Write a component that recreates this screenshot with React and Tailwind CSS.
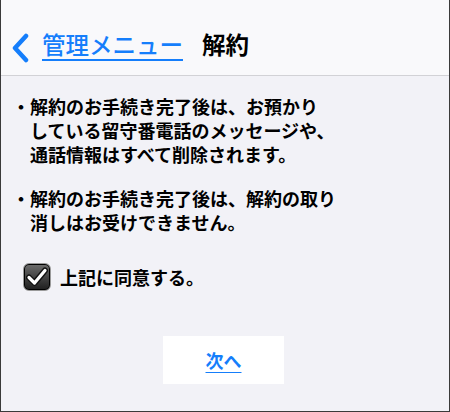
import React, { useState } from 'react';

const font = { fontFamily: '"Noto Sans CJK JP", "Noto Sans", sans-serif' };

function Bullet({ children }) {
  return (
    <div className="flex text-[18px] leading-[24px] font-bold text-black">
      <span className="w-[18px] shrink-0 text-center">・</span>
      <p>{children}</p>
    </div>
  );
}

function CheckBox({ checked }) {
  return (
    <span className="flex h-[28px] w-[28px] items-center justify-center rounded-[6px] border border-[#9a9a9a] bg-gradient-to-b from-[#6e6e6e] to-[#1e1e1e] shadow-[inset_0_0_0_1px_#000]">
      {checked && (
        <svg width="22" height="20" viewBox="0 0 22 20">
          <path d="M3 10.5 L8.5 16 L19 3.5" fill="none" stroke="#111" strokeWidth="6" strokeLinecap="round" strokeLinejoin="round" />
          <path d="M3 10.5 L8.5 16 L19 3.5" fill="none" stroke="#fff" strokeWidth="3.2" strokeLinecap="round" strokeLinejoin="round" />
        </svg>
      )}
    </span>
  );
}

export default function App() {
  const [agreed, setAgreed] = useState(true);

  return (
    <div style={font} className="flex h-[412px] w-[450px] flex-col border-x border-b border-[#3a3a3a] bg-[#f2f2f7]">
      {/* Header */}
      <div className="flex h-[76px] shrink-0 items-center border-b border-[#d2d2d6] bg-[#f9f9fb] pl-[9px] pt-[14px]">
        <svg width="22" height="30" viewBox="0 0 22 30" className="mr-[10px] mt-[6px]">
          <path d="M16 3 L5 15 L16 27" fill="none" stroke="#157efb" strokeWidth="4.5" strokeLinecap="round" strokeLinejoin="round" />
        </svg>
        <a className="text-[23.5px] font-medium leading-none text-[#157efb] underline underline-offset-[5px] decoration-[1.5px]">
          管理メニュー
        </a>
        <h1 className="ml-[19px] text-[23.5px] font-bold leading-none text-black">解約</h1>
      </div>

      {/* Body */}
      <div className="flex flex-col pl-[11px] pt-[18px]">
        <Bullet>
          解約のお手続き完了後は、お預かり
          <br />
          している留守番電話のメッセージや、
          <br />
          通話情報はすべて削除されます。
        </Bullet>
        <div className="mt-[20px]">
          <Bullet>
            解約のお手続き完了後は、解約の取り
            <br />
            消しはお受けできません。
          </Bullet>
        </div>

        <label
          className="mt-[29px] ml-[11px] flex items-center gap-[9px] cursor-pointer"
          onClick={() => setAgreed(a => !a)}
        >
          <CheckBox checked={agreed} />
          <span className="text-[18px] font-bold text-black">上記に同意する。</span>
        </label>
      </div>

      <div className="mt-[45px] flex justify-center pr-[3px]">
        <button className="flex h-[48px] w-[121px] items-center justify-center bg-white text-[18px] font-bold text-[#157efb] underline underline-offset-[4px]">
          次へ
        </button>
      </div>
    </div>
  );
}
